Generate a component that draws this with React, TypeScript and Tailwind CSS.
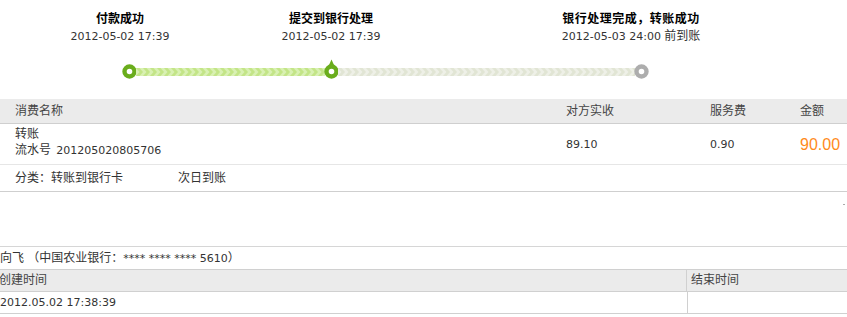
import React from "react";

const N = ({ children, className = "" }: { children: React.ReactNode; className?: string }) => (
  <span className={"font-['DejaVu_Sans',sans-serif] text-[11px] " + className}>{children}</span>
);

const Ring = ({ color }: { color: string }) => (
  <svg width="15" height="15" viewBox="0 0 15 15" className="block shrink-0">
    <circle cx="7.5" cy="7.5" r="5" fill="#fff" stroke={color} strokeWidth="4.4" />
  </svg>
);

const PinRing = ({ color }: { color: string }) => (
  <svg width="15" height="20" viewBox="0 0 15 20" className="block shrink-0 -mt-[5px]">
    <path d="M7.5 0.5 L10 6 L5 6 Z" fill={color} />
    <circle cx="7.5" cy="12.5" r="5" fill="#fff" stroke={color} strokeWidth="4.4" />
  </svg>
);

const Bar = ({ width, id, light, dark }: { width: number; id: string; light: string; dark: string }) => (
  <svg width={width} height="8" viewBox={`0 0 ${width} 8`} className="block shrink-0">
    <defs>
      <pattern id={id} width="7" height="8" patternUnits="userSpaceOnUse">
        <rect width="7" height="8" fill={light} />
        <polygon points="0,0 3.5,0 7,4 3.5,8 0,8 3.5,4" fill={dark} />
      </pattern>
    </defs>
    <rect width={width} height="8" fill={`url(#${id})`} />
  </svg>
);

export default function App() {
  return (
    <div className="relative w-[847px] h-[317px] overflow-hidden bg-white text-[12px] leading-[17px] text-[#333] font-['Liberation_Sans','Noto_Sans_CJK_SC',sans-serif]">
      {/* steps */}
      <div className="h-[99px]">
        <div className="flex pt-[11px] pl-[20px]">
          <div className="w-[200px] text-center">
            <div className="font-bold text-black">付款成功</div>
            <div><N>2012-05-02 17:39</N></div>
          </div>
          <div className="ml-[11px] w-[200px] text-center">
            <div className="font-bold text-black">提交到银行处理</div>
            <div><N>2012-05-02 17:39</N></div>
          </div>
          <div className="ml-[100px] w-[200px] text-center">
            <div className="font-bold text-black tracking-[0.5px]">银行处理完成，转账成功</div>
            <div><N>2012-05-03 24:00</N> 前到账</div>
          </div>
        </div>
        <div className="flex items-center h-[15px] mt-[19px] pl-[122px]">
          <Ring color="#6aad1c" />
          <div className="-ml-[1px]"><Bar width={189} id="g1" light="#d9f1b3" dark="#c3e587" /></div>
          <div className="-ml-[1px]"><PinRing color="#6aad1c" /></div>
          <div className="-ml-[1px]"><Bar width={297} id="g2" light="#eef0e7" dark="#e1e5d4" /></div>
          <div className="-ml-[1px]"><Ring color="#adadad" /></div>
        </div>
      </div>

      {/* detail table */}
      <div className="flex items-center h-[25px] bg-[#ebebeb] border-b border-[#cfcfcf] pl-[15px] text-[#444]">
        <div className="w-[551px]">消费名称</div>
        <div className="w-[144px]">对方实收</div>
        <div className="w-[90px]">服务费</div>
        <div>金额</div>
      </div>
      <div className="flex h-[41px] border-b border-[#e6e6e6] pl-[15px]">
        <div className="w-[551px] pt-[2px] leading-[16px]">
          <div>转账</div>
          <div>流水号 <N className="ml-[2px]">201205020805706</N></div>
        </div>
        <div className="w-[144px] flex items-center pt-[1px]"><N>89.10</N></div>
        <div className="w-[90px] flex items-center pt-[1px]"><N>0.90</N></div>
        <div className="flex items-center text-[16px] text-[#ff8a1c]">90.00</div>
      </div>
      <div className="flex items-center h-[27px] border-b border-[#cfcfcf] pl-[15px]">
        <div className="w-[163px]">分类：转账到银行卡</div>
        <div>次日到账</div>
      </div>

      <div className="h-[54px]" />

      {/* receiver */}
      <div className="flex items-center h-[23px] border-t border-[#d6d6d6]">
        向飞 （中国农业银行：<N>**** **** **** 5610</N>）
      </div>
      <div className="flex h-[22px] bg-[#ebebeb] border-t border-[#d0d0d0] text-[#444]">
        <div className="w-[688px] border-r border-[#d0d0d0] flex items-center -ml-[1px]">创建时间</div>
        <div className="flex items-center pl-[4px]">结束时间</div>
      </div>
      <div className="flex h-[23px] border-t border-b border-[#d0d0d0]">
        <div className="w-[688px] border-r border-[#d0d0d0] flex items-center"><N>2012.05.02 17:38:39</N></div>
        <div />
      </div>

      <span className="absolute left-[843px] top-[204px] w-[2px] h-[1px] bg-[#aaa]" />
    </div>
  );
}
